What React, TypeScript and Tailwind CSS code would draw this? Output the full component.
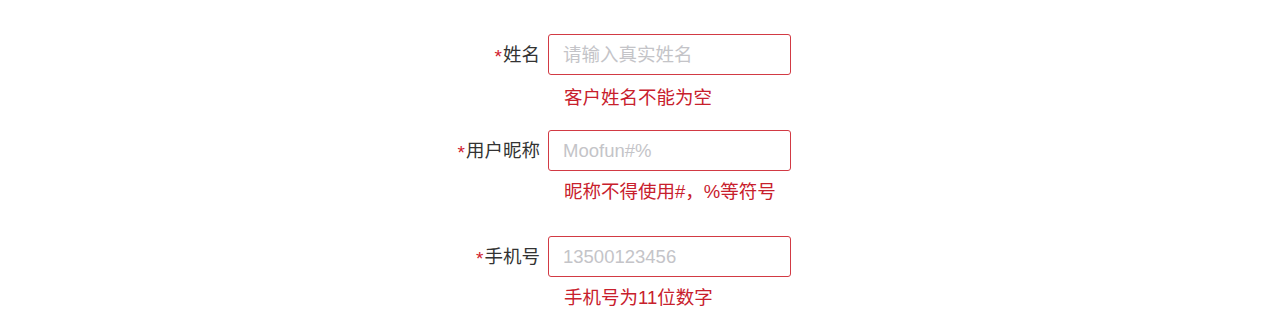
import React from 'react';

type Field = {
  label: string;
  placeholder: string;
  error: string;
  rowClass: string;
  errorClass: string;
};

const fields: Field[] = [
  { label: '姓名', placeholder: '请输入真实姓名', error: '客户姓名不能为空', rowClass: 'mt-[34px]', errorClass: 'mt-[11px]' },
  { label: '用户昵称', placeholder: 'Moofun#%', error: '昵称不得使用#，%等符号', rowClass: 'mt-[20px]', errorClass: 'mt-[9px]' },
  { label: '手机号', placeholder: '13500123456', error: '手机号为11位数字', rowClass: 'mt-[32px]', errorClass: 'mt-[9px]' },
];

export default function App() {
  return (
    <div
      className="w-[1280px] h-[334px] bg-white overflow-hidden"
      style={{ fontFamily: '"Liberation Sans", "Noto Sans CJK SC", sans-serif' }}
    >
      <div className="w-[400px] mx-auto">
        {fields.map((f) => (
          <div key={f.label}>
            <div className={`flex items-center ${f.rowClass}`}>
              <label className="w-[100px] text-right text-[18.5px] leading-6 text-[#333333] whitespace-nowrap">
                <span className="inline-block translate-y-[2px] mr-px text-[19px] text-[#d0202e]">*</span>
                {f.label}
              </label>
              <input
                placeholder={f.placeholder}
                className="ml-2 w-[243px] h-[41px] rounded-[3px] border border-[#d23a44] px-[14px] text-[18.5px] text-[#333333] placeholder-[#c4c4c8] outline-none"
              />
            </div>
            <div className={`pl-[124px] text-[18.5px] leading-6 text-[#c8202c] ${f.errorClass}`}>{f.error}</div>
          </div>
        ))}
      </div>
    </div>
  );
}
